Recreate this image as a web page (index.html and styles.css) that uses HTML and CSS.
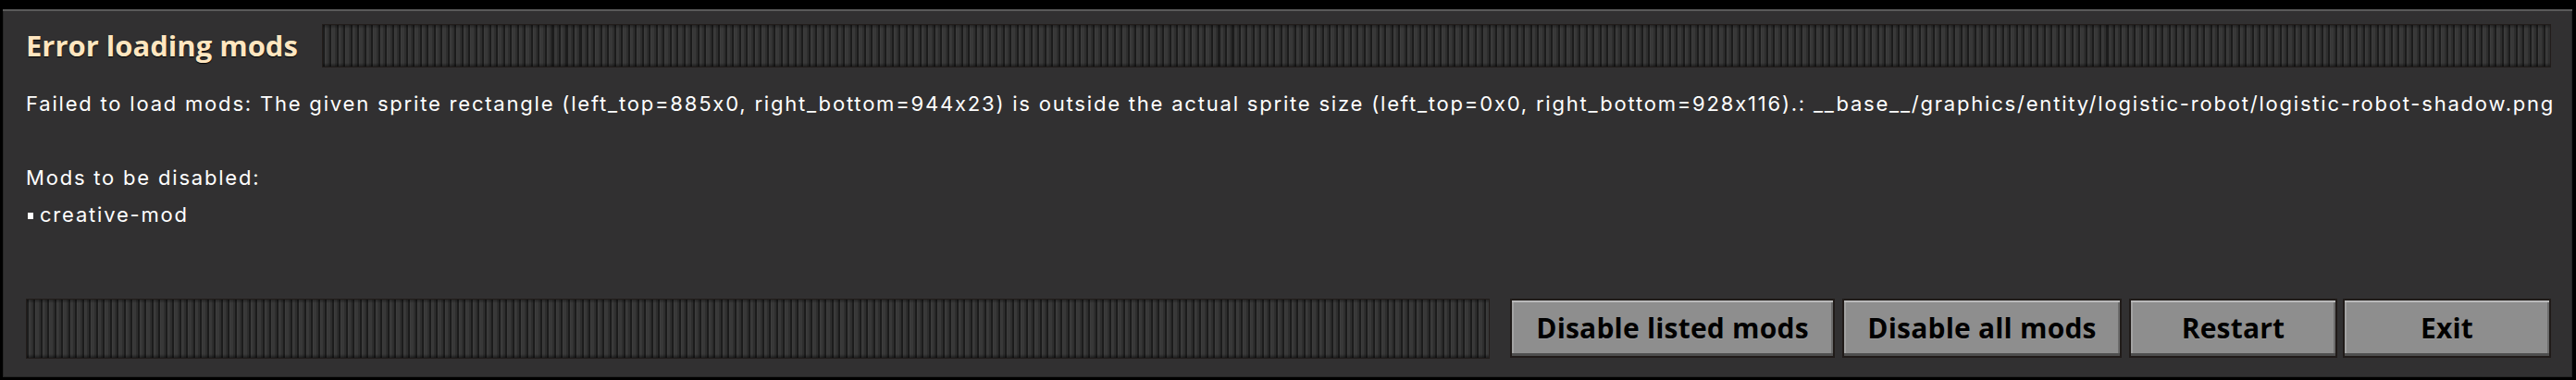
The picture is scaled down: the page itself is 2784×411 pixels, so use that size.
FILE: index.html
```html
<!DOCTYPE html>
<html lang="en">
<head>
<meta charset="utf-8">
<title>Error loading mods</title>
<link rel="stylesheet" href="styles.css">
</head>
<body>
<div class="frame">
  <div class="titlebar">
    <h1 class="title">Error loading mods</h1>
    <div class="drag drag-title"></div>
  </div>
  <div class="content">
    <p class="line">Failed to load mods: The given sprite rectangle (left_top=885x0, right_bottom=944x23) is outside the actual sprite size (left_top=0x0, right_bottom=928x116).: __base__/graphics/entity/logistic-robot/logistic-robot-shadow.png</p>
    <p class="line blank">&nbsp;</p>
    <p class="line">Mods to be disabled:</p>
    <p class="line"><span class="bullet"></span>creative-mod</p>
  </div>
  <div class="footer">
    <div class="drag drag-footer"></div>
    <button class="btn btn-listed">Disable listed mods</button>
    <button class="btn btn-all">Disable all mods</button>
    <button class="btn btn-restart">Restart</button>
    <button class="btn btn-exit">Exit</button>
  </div>
</div>
</body>
</html>
```

FILE: styles.css
```css
html, body {
  margin: 0;
  padding: 0;
  background: #000;
}

body {
  width: 2784px;
  height: 411px;
  overflow: hidden;
  font-family: "Inter", "Noto Sans", sans-serif;
}

.frame {
  box-sizing: border-box;
  margin: 10px 0 0 3px;
  width: 2777px;
  height: 398px;
  background: #313031;
  border-top: 2px solid #5a5a5a;
  box-shadow: inset 1px 0 0 #262626, inset -1px 0 0 #262626, inset 0 -1px 0 #262626;
  padding: 14px 23px 20px 25px;
  display: flex;
  flex-direction: column;
}

.titlebar {
  display: flex;
  align-items: center;
  height: 47px;
}

.title {
  margin: 0 26px 0 0;
  font-family: "Open Sans", sans-serif;
  font-weight: 700;
  font-size: 31px;
  line-height: 47px;
  color: #ffe6c0;
  white-space: nowrap;
  text-shadow: 0 1px 1px #000;
}

.drag {
  box-sizing: border-box;
  flex: 1;
  border: 1px solid #221d1b;
  background-color: #262626;
  background-image:
    linear-gradient(to bottom, rgba(0,0,0,0.35) 0, rgba(0,0,0,0) 4px, rgba(0,0,0,0) calc(100% - 4px), rgba(0,0,0,0.45) 100%),
    repeating-linear-gradient(to right, #1c1c1c 0 2px, #3d3d3d 2px 3px, #383838 3px 5.5px, #2e2e2e 5.5px 7.5px);
}

.drag-title {
  height: 47px;
}

.content {
  margin-top: 19px;
  color: #ffffff;
  font-family: "Inter", "Noto Sans", sans-serif;
  font-feature-settings: "calt" 0;
  font-size: 22px;
  letter-spacing: 1.8px;
}

.line {
  margin: 0;
  line-height: 40px;
  height: 40px;
  white-space: nowrap;
}

.bullet {
  display: inline-block;
  width: 6px;
  height: 7px;
  background: #ffffff;
  margin: 0 7px 2px 2px;
  vertical-align: middle;
}

.footer {
  margin-top: auto;
  display: flex;
  align-items: stretch;
  height: 65px;
}

.drag-footer {
  height: 65px;
  margin-right: 22px;
}

.btn {
  box-sizing: border-box;
  flex: none;
  height: 64px;
  margin-left: 8px;
  padding: 0 0 2px;
  background: #8e8e8e;
  border: 2px solid #201b19;
  box-shadow:
    inset 0 2px 0 #b9b9b9,
    inset 0 -3px 0 #4e4e4e,
    inset 2px 0 0 #a3a3a3,
    inset -2px 0 0 #6c6c6c;
  font-family: "Open Sans", sans-serif;
  font-weight: 700;
  font-size: 30px;
  letter-spacing: 0.2px;
  color: #000;
  text-shadow: 0 1px 0 rgba(255,255,255,0.15);
  cursor: pointer;
}

.btn-listed { width: 351px; margin-left: 0; }
.btn-all { width: 302px; }
.btn-restart { width: 225px; }
.btn-exit { width: 225px; margin-left: 6px; }
```
